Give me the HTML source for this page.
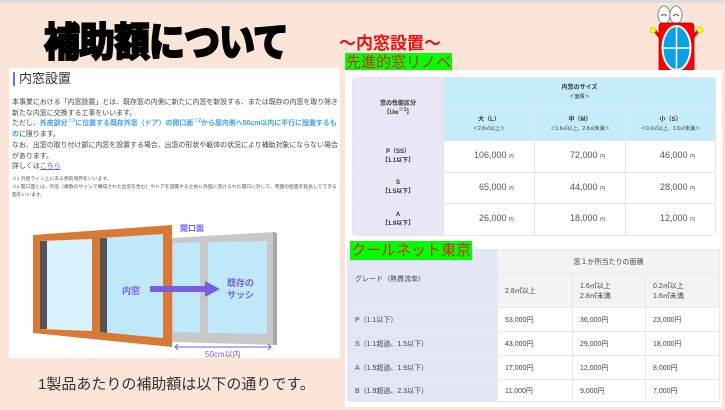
<!DOCTYPE html>
<html><head><meta charset="utf-8"><style>
*{margin:0;padding:0;box-sizing:border-box}
body{width:725px;height:410px;background:#fbe5d8;position:relative;overflow:hidden;font-family:"Liberation Sans","Noto Sans CJK JP",sans-serif}
.abs{position:absolute}
.topbar{left:0;top:0;width:725px;height:3px;background:#dcdcdc}
.title{left:44px;top:21px;font-size:36px;font-weight:900;color:#000;letter-spacing:-1px;transform:scaleY(1.1);-webkit-text-stroke:1.5px #000;line-height:44px}
.sub{left:339px;top:29px;font-size:17px;font-weight:bold;color:#f01010}
.green{background:#00ff00;color:#e02020;font-size:15px;line-height:19px;padding:0 1px}
.lp{left:9px;top:68px;width:331px;height:290px;background:#fff}
.lp h2{position:absolute;left:4px;top:4px;font-size:13px;font-weight:normal;color:#333;border-left:2px solid #7a6ee0;padding-left:4px;line-height:14px}
.lp .body{position:absolute;left:3px;top:30px;width:327px;font-size:6.95px;line-height:10.7px;color:#444}
sup{font-size:5px;line-height:0;vertical-align:3px}
.blue{color:#3ba0f0;font-weight:bold}
.lp .note{position:absolute;left:3px;top:108px;width:326px;font-size:4.8px;line-height:8px;color:#555}
.cap{left:38px;top:373px;font-size:15px;color:#333}
.rp1{left:345px;top:70px;width:377px;height:175px;background:#fff}
.rp2{left:345px;top:245px;width:377px;height:162px;background:#fff}
table{border-collapse:collapse;position:absolute}
.t1{left:352px;top:77px;width:364px;font-size:6px;color:#333;border-radius:4px;overflow:hidden}
.t1 td{border:1px solid #e6e6ea;text-align:center;font-weight:bold;line-height:9px}
.t1 .h{background:#c5ecfb}
.t1 .l{background:#ebe5f8}
.t1 .n{text-align:right;font-weight:normal;font-size:9px;padding-right:20px;color:#555}
.t1 .n small{font-size:5px}
.t2{left:347px;top:249px;width:373px;font-size:7px;color:#444}
.t2 td{border:1px solid #e8e8e8;padding-left:7px}
.t2 .l{background:#e5e5f8}
.t2 .h{background:#f3f3f3}
</style></head><body>
<div class="abs topbar"></div>
<div class="abs title">補助額について</div>
<div class="abs sub">～内窓設置～</div>
<div class="abs green" style="left:345px;top:53px">先進的窓リノベ</div>

<svg class="abs" style="left:645px;top:3px" width="65" height="76" viewBox="0 0 65 76">
<ellipse cx="19" cy="12" rx="6" ry="9" fill="#fff" stroke="#888"/>
<ellipse cx="31" cy="12" rx="6" ry="9" fill="#fff" stroke="#888"/>
<path d="M16 13q3-3 6 0M28 13q3-3 6 0" stroke="#555" fill="none"/>
<path d="M10 28l5 6M53 28l-5 6" stroke="#e00" stroke-width="3"/>
<circle cx="8" cy="27" r="3" fill="#ff0" stroke="#aa0" stroke-width=".5"/>
<circle cx="55" cy="27" r="3" fill="#ff0" stroke="#aa0" stroke-width=".5"/>
<rect x="14" y="20" width="35" height="50" rx="3" fill="#f00" stroke="#900" stroke-width=".7"/>
<ellipse cx="31.5" cy="45" rx="14" ry="22" fill="#0aa0e8" stroke="#fff" stroke-width="2"/>
<path d="M31.5 23v44M17.5 45h28" stroke="#fff" stroke-width="1.5"/>
<ellipse cx="23" cy="72" rx="6" ry="2.5" fill="#ff0" stroke="#aa0" stroke-width=".5"/>
<ellipse cx="40" cy="72" rx="6" ry="2.5" fill="#ff0" stroke="#aa0" stroke-width=".5"/>
</svg>

<div class="abs lp">
<h2>内窓設置</h2>
<div class="body">本事業における「内窓設置」とは、既存窓の内側に新たに内窓を新設する、または既存の内窓を取り除き新たな内窓に交換する工事をいいます。<br>ただし、<span class="blue">外皮部分<sup>※1</sup>に位置する既存外窓（ドア）の開口面<sup>※2</sup>から屋内側へ50cm以内に平行に設置するもの</span>に限ります。<br>なお、出窓の取り付け部に内窓を設置する場合、出窓の形状や躯体の状況により補助対象にならない場合があります。<br>詳しくは<span style="color:#7a5ee0;text-decoration:underline">こちら</span></div>
<div class="note">※1 外壁ライン上にある熱的境界をいいます。<br>※2 開口面とは、外窓（複数のサッシで構成された出窓を含む）やドアを設置するために外壁に空けられた開口に対して、周囲の壁面を延長してできる面をいいます。</div>
<svg style="position:absolute;left:0;top:152px" width="331" height="138" viewBox="0 0 331 138">
<polygon points="163,18 266,12 266,125 163,122" fill="#c8c8c8"/>
<polygon points="164,23 258,21 258,114 164,112" fill="#bfe9fb"/>
<rect x="191" y="21" width="8" height="92" fill="#c8c8c8"/>
<polygon points="264,12 268,13 268,125 264,125" fill="#a8a8a8"/>
<polygon points="24,15 163,5 163,127 24,113" fill="#d87a35"/>
<polygon points="31,21 83,19 83,111 31,109" fill="#d9f2fd"/>
<polygon points="31,21 38,21 38,109 31,109" fill="#555"/>
<polygon points="91,18 154,14 154,118 91,112" fill="#bfe9fb"/>
<polygon points="91,18 98,18 98,113 91,112" fill="#555"/>
<text x="113" y="74" font-size="9" font-weight="bold" fill="#7a5ee0">内窓</text>
<rect x="141" y="66" width="57" height="6" fill="#7a5ee0"/>
<polygon points="196,61 211,69 196,77" fill="#7a5ee0"/>
<text x="218" y="66" font-size="9" font-weight="bold" fill="#7a5ee0">既存の</text>
<text x="218" y="78" font-size="9" font-weight="bold" fill="#7a5ee0">サッシ</text>
<text x="171" y="11" font-size="8" font-weight="bold" fill="#7a5ee0">開口面</text>
<path d="M166 127h96" stroke="#7a5ee0"/>
<path d="M169 124l-3 3 3 3M259 124l3 3-3 3" stroke="#7a5ee0" fill="none"/>
<text x="196" y="137" font-size="8" fill="#7a5ee0">50cm以内</text>
</svg>
</div>
<div class="abs cap">1製品あたりの補助額は以下の通りです。</div>

<div class="abs rp1"></div>
<table class="t1">
<tr style="height:31px"><td class="l" rowspan="2" style="width:91px">窓の性能区分<br>【Uw<sup>※1</sup>】</td><td class="h" colspan="3">内窓のサイズ<br><span style="font-weight:normal;font-size:5px">＜面積＞</span></td></tr>
<tr style="height:32px"><td class="h" style="width:91px">大（L）<br><span style="font-weight:normal;font-size:5px">＜2.8㎡以上＞</span></td><td class="h" style="width:91px">中（M）<br><span style="font-weight:normal;font-size:5px">＜1.6㎡以上、2.8㎡未満＞</span></td><td class="h">小（S）<br><span style="font-weight:normal;font-size:5px">＜0.2㎡以上、1.6㎡未満＞</span></td></tr>
<tr style="height:32px"><td class="l">P（SS）<br>【1.1以下】</td><td class="n">106,000 <small>円</small></td><td class="n">72,000 <small>円</small></td><td class="n">46,000 <small>円</small></td></tr>
<tr style="height:31px"><td class="l">S<br>【1.5以下】</td><td class="n">65,000 <small>円</small></td><td class="n">44,000 <small>円</small></td><td class="n">28,000 <small>円</small></td></tr>
<tr style="height:32px"><td class="l">A<br>【1.9以下】</td><td class="n">26,000 <small>円</small></td><td class="n">18,000 <small>円</small></td><td class="n">12,000 <small>円</small></td></tr>
</table>

<div class="abs rp2"></div>
<table class="t2">
<tr style="height:24px"><td class="l" rowspan="2" style="width:150px">グレード（熱貫流率）</td><td class="h" colspan="3" style="text-align:center;padding:0">窓１か所当たりの面積</td></tr>
<tr style="height:34px"><td class="h" style="width:75px">2.8㎡以上</td><td class="h" style="width:73px">1.6㎡以上<br>2.8㎡未満</td><td class="h">0.2㎡以上<br>1.6㎡未満</td></tr>
<tr style="height:24px"><td class="l">P（1.1以下）</td><td>53,000円</td><td>36,000円</td><td>23,000円</td></tr>
<tr style="height:24px"><td class="l">S（1.1超過、1.5以下）</td><td>43,000円</td><td>29,000円</td><td>18,000円</td></tr>
<tr style="height:24px"><td class="l">A（1.5超過、1.9以下）</td><td>17,000円</td><td>12,000円</td><td>8,000円</td></tr>
<tr style="height:22px"><td class="l">B（1.9超過、2.3以下）</td><td>11,000円</td><td>9,000円</td><td>7,000円</td></tr>
</table>
<div class="abs green" style="left:350px;top:241px">クールネット東京</div>
</body></html>
